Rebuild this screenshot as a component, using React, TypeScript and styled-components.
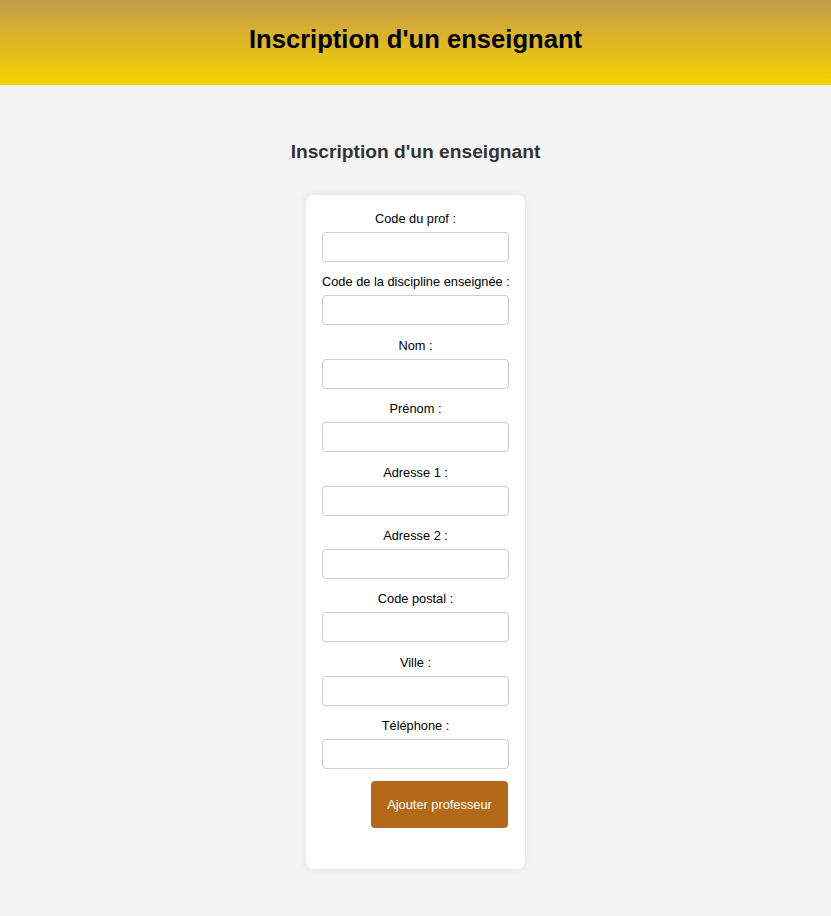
import React from "react";
import styled, { createGlobalStyle } from "styled-components";

const GlobalStyle = createGlobalStyle`
  html, body {
    margin: 0;
    padding: 0;
    background: #f4f4f4;
    font-family: "Liberation Sans", Arial, sans-serif;
  }
`;

const Header = styled.header`
  box-sizing: border-box;
  height: 85px;
  padding-top: 25px;
  background: linear-gradient(to bottom, #c49c4b, #f7d300);
  text-align: center;
`;

const HeaderTitle = styled.h1`
  margin: 0;
  font-size: 25.6px;
  font-weight: bold;
  color: #000;
`;

const Main = styled.main`
  display: flex;
  flex-direction: column;
  align-items: center;
  padding-top: 56px;
  padding-bottom: 48px;
`;

const PageTitle = styled.h2`
  margin: 0 0 32px;
  font-size: 19.2px;
  font-weight: bold;
  color: #333;
`;

const Card = styled.form`
  width: 187px;
  padding: 16px 16px 16px;
  background: #fff;
  border-radius: 8px;
  box-shadow: 0 0 10px rgba(0, 0, 0, 0.08);
  display: flex;
  flex-direction: column;
`;

const Fields = styled.div`
  display: flex;
  flex-direction: column;
  gap: 12.4px;
`;

const Field = styled.div`
  display: flex;
  flex-direction: column;
  gap: 6px;
`;

const Label = styled.label`
  font-size: 12.8px;
  color: #000;
  text-align: center;
  white-space: nowrap;
`;

const Input = styled.input`
  box-sizing: border-box;
  width: 100%;
  height: 30px;
  border: 1px solid #ccc;
  border-radius: 4px;
  background: #fff;
  padding: 0 8px;
  font-family: inherit;
`;

const ButtonRow = styled.div`
  display: flex;
  justify-content: flex-end;
  margin: 12px 1px 25px 0;
`;

const Button = styled.button`
  box-sizing: border-box;
  height: 47px;
  width: 137px;
  border: none;
  border-radius: 4px;
  background: #b36a18;
  color: #fff;
  font-family: "Liberation Sans", Arial, sans-serif;
  font-size: 12.8px;
  cursor: pointer;
`;

const fields = [
  "Code du prof :",
  "Code de la discipline enseignée :",
  "Nom :",
  "Prénom :",
  "Adresse 1 :",
  "Adresse 2 :",
  "Code postal :",
  "Ville :",
  "Téléphone :",
];

export default function App() {
  return (
    <>
      <GlobalStyle />
      <Header>
        <HeaderTitle>Inscription d'un enseignant</HeaderTitle>
      </Header>
      <Main>
        <PageTitle>Inscription d'un enseignant</PageTitle>
        <Card onSubmit={(e) => e.preventDefault()}>
          <Fields>
            {fields.map((f, i) => (
              <Field key={i}>
                <Label htmlFor={`f${i}`}>{f}</Label>
                <Input id={`f${i}`} type="text" />
              </Field>
            ))}
          </Fields>
          <ButtonRow>
            <Button type="submit">Ajouter professeur</Button>
          </ButtonRow>
        </Card>
      </Main>
    </>
  );
}
